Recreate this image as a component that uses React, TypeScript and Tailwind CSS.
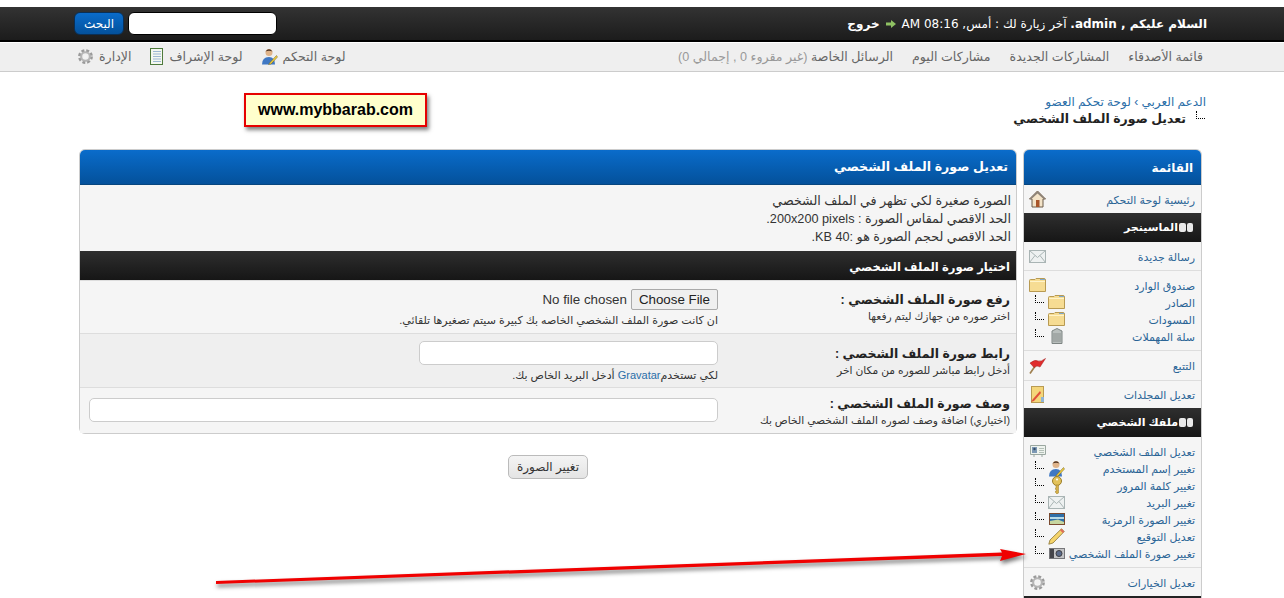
import { ReactNode } from "react";

const AR = "font-['Liberation_Sans','DejaVu_Sans',sans-serif]";

// small pictures used in the menus, drawn by hand
function Folder() {
  return (
    <svg width="17" height="14" viewBox="0 0 17 14">
      <path d="M.5 2.5 Q.5 1.5 1.5 1.5 H6 L7 .5 H15 Q16.5 .5 16.5 2 V13.5 H.5 Z" fill="#f6dc93" stroke="#b89a52" />
      <path d="M1 3.5 H16" stroke="#fff3c8" />
      <path d="M11 1.5 H16" stroke="#7fa7c9" />
    </svg>
  );
}

function House() {
  return (
    <svg width="17" height="18" viewBox="0 0 17 18">
      <path d="M8.5 1 L16.5 9 H14 V17 H3 V9 H.5 Z" fill="#f3e3c8" stroke="#6b5a48" />
      <path d="M8.5 1 L16.5 9 L14.5 9 L8.5 3.5 L2.5 9 L.5 9 Z" fill="#8d8276" />
      <rect x="7" y="10" width="3.5" height="7" fill="#a8552a" />
    </svg>
  );
}

function Mail() {
  return (
    <svg width="17" height="13" viewBox="0 0 17 13">
      <rect x=".5" y=".5" width="16" height="12" fill="#eef1f1" stroke="#a9b4b4" />
      <path d="M.5 .5 L8.5 7.5 L16.5 .5 M.5 12.5 L6 5.5 M16.5 12.5 L11 5.5" fill="none" stroke="#a9b4b4" />
    </svg>
  );
}

function Trash() {
  return (
    <svg width="12" height="16" viewBox="0 0 12 16">
      <path d="M1 3 L6 .5 L11 3 V15.5 H1 Z" fill="#b9bfbd" stroke="#7d8482" />
      <path d="M3 5 V14 M5 5 V14 M7 5 V14 M9 5 V14" stroke="#8b918f" />
    </svg>
  );
}

function Flag() {
  return (
    <svg width="17" height="16" viewBox="0 0 17 16">
      <path d="M1 15.5 L6.5 7.5" stroke="#a08050" strokeWidth="1.6" />
      <path d="M1 5 Q6 1 9 3 Q12 4 16.5 .5 L11 9 Q8 7 5 9.5 Z" fill="#e02c2c" stroke="#a01818" strokeWidth=".5" />
    </svg>
  );
}

function FolderPen() {
  return (
    <svg width="15" height="17" viewBox="0 0 15 17">
      <rect x="1.5" y=".5" width="12" height="16" fill="#f4d67a" stroke="#b89a52" />
      <path d="M10 5 L3 13 L1 16 L4 15 L11 7 Z" fill="#e0503a" />
      <rect x="11" y="11" width="3" height="5" fill="#8fb5d6" />
    </svg>
  );
}

function Card() {
  return (
    <svg width="16" height="13" viewBox="0 0 16 13">
      <path d="M.5 .5 H15.5 V9.5 H.5 Z" fill="#eef3ee" stroke="#9aa7a0" />
      <path d="M4 9.5 V12 M12 9.5 V12" stroke="#9aa7a0" />
      <rect x="2" y="2" width="5" height="6" fill="#7d98b4" />
      <circle cx="4.5" cy="4" r="1.2" fill="#2f4a66" />
      <path d="M9 3.5 H14 M9 5.5 H14 M9 7.5 H14" stroke="#b4c0b8" />
    </svg>
  );
}

function UserPen() {
  return (
    <svg width="16" height="17" viewBox="0 0 16 17">
      <circle cx="7" cy="4.5" r="3.5" fill="#e0b48a" />
      <path d="M3.5 3.5 Q7 -1 10.5 3.5 Q7 2 3.5 3.5Z" fill="#4a3020" />
      <path d="M0 16.5 Q0 9 7 9 Q13 9 13 16.5 Z" fill="#3f78c4" />
      <path d="M14.5 7.5 L8 14.5 L6.5 16.5 L9 16 L15.5 9 Z" fill="#f2cf3b" stroke="#6b5a20" strokeWidth=".5" />
    </svg>
  );
}

function Key() {
  return (
    <svg width="10" height="18" viewBox="0 0 10 18">
      <circle cx="5" cy="5" r="4.5" fill="#e3c25a" stroke="#9a7d28" />
      <circle cx="5" cy="3.5" r="1" fill="#fff" />
      <path d="M4 9 H6.5 V17 L5 18 L3.5 16.5 V15 H4.5 V13.5 H3.5 V12 H4 Z" fill="#d6b048" stroke="#9a7d28" strokeWidth=".5" />
    </svg>
  );
}

function Picture() {
  return (
    <svg width="16" height="12" viewBox="0 0 16 12">
      <rect x=".5" y=".5" width="15" height="11" fill="#2f6fa8" stroke="#7a4a30" />
      <path d="M1 4 H15 V6 H1 Z" fill="#b8dbe8" />
      <path d="M1 11 L1 8 L9 6.5 L15 9 V11 Z" fill="#c7d6a0" />
    </svg>
  );
}

function Pencil() {
  return (
    <svg width="17" height="17" viewBox="0 0 17 17">
      <path d="M13.5 .8 L16.2 3.5 L5 15 L.8 16.2 L2 12 Z" fill="#f5d46b" stroke="#8a7434" strokeWidth=".8" />
      <path d="M13.5 .8 L16.2 3.5 L14.8 5 L12 2.3 Z" fill="#e06c5a" />
    </svg>
  );
}

function Camera() {
  return (
    <svg width="16" height="11" viewBox="0 0 16 11">
      <rect x=".5" y=".5" width="15" height="10" fill="#c4c4c6" stroke="#77777a" />
      <rect x="1" y="1" width="4" height="9" fill="#45454a" />
      <circle cx="10" cy="5.5" r="3" fill="#5b6b8a" stroke="#3d3d42" />
    </svg>
  );
}

function Gear({ size = 15 }: { size?: number }) {
  return (
    <svg width={size} height={size} viewBox="0 0 16 16">
      <circle cx="8" cy="8" r="6.4" fill="none" stroke="#9a9a9a" strokeWidth="3" strokeDasharray="3 2.03" />
      <circle cx="8" cy="8" r="4.6" fill="none" stroke="#b5b5b5" strokeWidth="2.2" />
      <circle cx="8" cy="8" r="2.4" fill="#f2f2f2" />
    </svg>
  );
}

function Notebook() {
  return (
    <svg width="13" height="17" viewBox="0 0 13 17">
      <rect x=".5" y=".5" width="12" height="16" fill="#f4f8f0" stroke="#4e7a3c" />
      <path d="M3 3.5 H11 M3 6 H11 M3 8.5 H11 M3 11 H11 M3 13.5 H11" stroke="#9db8d4" />
    </svg>
  );
}

function GreenArrow() {
  return (
    <svg width="10" height="8" viewBox="0 0 10 8" className="mx-[6px] inline-block">
      <path d="M0 2.5 H5 V0 L10 4 L5 8 V5.5 H0 Z" fill="#8fc163" />
    </svg>
  );
}

// dotted tree connector in front of nested menu rows
function Tree() {
  return <span className="mb-[6px] block h-[8px] w-[9px] border-b border-l border-dotted border-black" />;
}

function MenuGroup({ children, last }: { children: ReactNode; last?: boolean }) {
  return <div className={`pr-[6px] pl-[5px] ${last ? "" : "border-b border-[#ddd]"}`}>{children}</div>;
}

function MenuRow({ icon, label, nested }: { icon: ReactNode; label: string; nested?: boolean }) {
  return (
    <div className="flex h-[17px] items-center justify-between">
      <a className="translate-y-px text-[11px] leading-[17px] whitespace-nowrap text-[#2a6496]">{label}</a>
      <span className="flex items-center">
        <span className="flex w-[17px] justify-center">{icon}</span>
        {nested && (
          <>
            <span className="w-[4px]" />
            <Tree />
            <span className="w-[6px]" />
          </>
        )}
      </span>
    </div>
  );
}

function MenuHead({ label }: { label: string }) {
  return (
    <div className="flex h-[29px] items-center gap-[1px] bg-gradient-to-b from-[#2f2f2f] to-[#161616] pr-[8px] text-[11px] font-bold text-white">
      <span className="flex h-[9px] w-[14px] gap-[1px]">
        <span className="flex-1 rounded-[2px] bg-[#e9e9e9]" />
        <span className="flex-1 rounded-[2px] bg-[#e9e9e9]" />
      </span>
      <span>{label}</span>
    </div>
  );
}

function BlueHead({ label, size }: { label: string; size: string }) {
  return (
    <div className={`flex h-[35px] items-center rounded-t-[5px] border-b border-[#07467f] bg-gradient-to-b from-[#0a6ccb] to-[#04519b] pr-[8px] font-bold text-white ${size}`}>
      {label}
    </div>
  );
}

function Sidebar() {
  return (
    <aside className="h-[470px] w-[179px] shrink-0 rounded-t-[6px] border border-b-0 border-[#ccc] bg-[#f5f5f5]">
      <BlueHead label="القائمة" size="text-[12px] pt-[2px]" />
      <MenuGroup last>
        <div className="flex h-[28px] items-center">
          <div className="w-full"><MenuRow icon={<House />} label="رئيسية لوحة التحكم" /></div>
        </div>
      </MenuGroup>
      <MenuHead label="الماسينجر" />
      <MenuGroup>
        <div className="flex h-[28px] items-center">
          <div className="w-full"><MenuRow icon={<Mail />} label="رسالة جديدة" /></div>
        </div>
      </MenuGroup>
      <MenuGroup>
        <div className="flex h-[79px] flex-col justify-center">
          <MenuRow icon={<Folder />} label="صندوق الوارد" />
          <MenuRow icon={<Folder />} label="الصادر" nested />
          <MenuRow icon={<Folder />} label="المسودات" nested />
          <MenuRow icon={<Trash />} label="سلة المهملات" nested />
        </div>
      </MenuGroup>
      <MenuGroup>
        <div className="flex h-[29px] items-center">
          <div className="w-full"><MenuRow icon={<Flag />} label="التتبع" /></div>
        </div>
      </MenuGroup>
      <MenuGroup last>
        <div className="flex h-[27px] items-center">
          <div className="w-full"><MenuRow icon={<FolderPen />} label="تعديل المجلدات" /></div>
        </div>
      </MenuGroup>
      <MenuHead label="ملفك الشخصي" />
      <MenuGroup>
        <div className="flex h-[130px] flex-col justify-center">
          <MenuRow icon={<Card />} label="تعديل الملف الشخصي" />
          <MenuRow icon={<UserPen />} label="تغيير إسم المستخدم" nested />
          <MenuRow icon={<Key />} label="تغيير كلمة المرور" nested />
          <MenuRow icon={<Mail />} label="تغيير البريد" nested />
          <MenuRow icon={<Picture />} label="تغيير الصورة الرمزية" nested />
          <MenuRow icon={<Pencil />} label="تعديل التوقيع" nested />
          <MenuRow icon={<Camera />} label="تغيير صورة الملف الشخصي" nested />
        </div>
      </MenuGroup>
      <MenuGroup last>
        <div className="flex h-[28px] items-center">
          <div className="w-full"><MenuRow icon={<Gear />} label="تعديل الخيارات" /></div>
        </div>
      </MenuGroup>
      <div className="h-[2px] bg-[#222]" />
    </aside>
  );
}

interface FormRowProps {
  title: string;
  hint: string;
  children: ReactNode;
  shade?: boolean;
  height: string;
  labelTop: string;
  fieldTop: string;
}

function FormRow({ title, hint, children, shade, height, labelTop, fieldTop }: FormRowProps) {
  return (
    <div className={`flex border-t border-[#ddd] ${height} ${shade ? "bg-[#efefef]" : "bg-[#f5f5f5]"}`}>
      <div className={`w-[298px] shrink-0 pr-[6px] ${labelTop}`}>
        <div className="text-[12.5px] leading-[17px] font-bold text-[#222]">{title}</div>
        <div className="mt-[1px] text-[10.7px] leading-[13px] text-[#333]">{hint}</div>
      </div>
      <div className={`flex-1 ${fieldTop}`}>{children}</div>
    </div>
  );
}

function TextInput({ className }: { className: string }) {
  return <input className={`block h-[24px] rounded-[5px] border border-[#ccc] bg-white ${className}`} />;
}

export default function App() {
  return (
    <div dir="rtl" className={`relative h-[598px] w-[1284px] overflow-hidden bg-white ${AR}`}>
      <div className="h-[7px] bg-white" />

      <header className="flex h-[35px] items-center justify-between border-b-2 border-black bg-gradient-to-b from-[#333] to-[#1c1c1c] pr-[77px] pl-[74px]">
        <div className="flex items-center font-['DejaVu_Sans',sans-serif] text-[12px] text-white">
          <span><b>السلام عليكم , admin.</b> آخر زيارة لك : أمس, 08:16 AM</span>
          <GreenArrow />
          <b>خروج</b>
        </div>
        <div className="flex items-center gap-[4px]">
          <input className="h-[23px] w-[149px] rounded-[6px] border border-black bg-white" />
          <button className="h-[23px] w-[50px] rounded-[6px] border border-[#0a2f55] bg-gradient-to-b from-[#0a6ccb] to-[#04519b] text-[12px] text-white">البحث</button>
        </div>
      </header>

      <nav className="mt-px flex h-[29px] items-center justify-between border-b border-[#ccc] bg-[#efefef] pr-[81px] pl-[78px] text-[12.6px] text-[#666]">
        <div className="flex gap-[19px]">
          <a>قائمة الأصدقاء</a>
          <a>المشاركات الجديدة</a>
          <a>مشاركات اليوم</a>
          <a>
            الرسائل الخاصة <span className="text-[#999]">(غير مقروء 0 , إجمالي 0)</span>
          </a>
        </div>
        <div className="flex items-center gap-[19px]">
          <a className="flex items-center gap-[5px]">لوحة التحكم <UserPen /></a>
          <a className="flex items-center gap-[6px]">لوحة الإشراف <Notebook /></a>
          <a className="flex items-center gap-[6px]">الإدارة <Gear /></a>
        </div>
      </nav>

      <main className="pr-[78px] pl-[79px]">
        <div className="pt-[22px]">
          <div className="text-[12px] leading-[16px] text-[#2a6ea8]">الدعم العربي › لوحة تحكم العضو</div>
          <div className="flex items-center pr-[1px]">
            <span className="mb-[8px] block h-[8px] w-[9px] border-b border-l border-dotted border-black" />
            <span className="mr-[10px] text-[12.5px] leading-[18px] font-bold text-[#222]">تعديل صورة الملف الشخصي</span>
          </div>
        </div>

        <div className="mt-[21px] flex gap-[6px] pr-[4px]">
          <Sidebar />

          <section className="w-[938px]">
            <div className="rounded-[6px] border border-[#ccc]">
              <BlueHead label="تعديل صورة الملف الشخصي" size="text-[12.6px]" />
              <div className="h-[66px] bg-[#f5f5f5] pt-[7px] pr-[5px] text-[12.7px] leading-[18px] text-[#333]">
                <div>الصورة صغيرة لكي تظهر في الملف الشخصي</div>
                <div>الحد الاقصي لمقاس الصورة : 200x200 pixels.</div>
                <div>الحد الاقصي لحجم الصورة هو :40 KB.</div>
              </div>
              <div className="flex h-[29px] items-center bg-gradient-to-b from-[#2f2f2f] to-[#161616] pt-[2px] pr-[6px] text-[11.6px] font-bold text-white">
                اختيار صورة الملف الشخصي
              </div>
              <FormRow title="رفع صورة الملف الشخصي :" hint="اختر صوره من جهازك ليتم رفعها" height="h-[53px]" labelTop="pt-[11px]" fieldTop="pt-[8px]">
                <input
                  type="file"
                  className="block h-[22px] w-[240px] text-[13.33px] text-[#333] file:ml-[4px] file:h-[21px] file:rounded-[2px] file:border file:border-[#aaa] file:bg-[#efefef] file:px-[7px] file:text-[13.33px] file:text-[#222]"
                />
                <div className="mt-[3px] text-[11px] leading-[13px] text-[#333]">ان كانت صورة الملف الشخصي الخاصه بك كبيرة سيتم تصغيرها تلقائي.</div>
              </FormRow>
              <FormRow title="رابط صورة الملف الشخصي :" hint="أدخل رابط مباشر للصوره من مكان اخر" shade height="h-[54px]" labelTop="pt-[12px]" fieldTop="pt-[7px]">
                <TextInput className="w-[299px]" />
                <div className="mt-[4px] text-[11px] leading-[13px] text-[#333]">
                  لكي تستخدم<a className="text-[#2a6ea8]">Gravatar</a> أدخل البريد الخاص بك.
                </div>
              </FormRow>
              <FormRow title="وصف صورة الملف الشخصي :" hint="(اختياري) اضافة وصف لصوره الملف الشخصي الخاص بك" height="h-[46px]" labelTop="pt-[8px]" fieldTop="pt-[10px]">
                <TextInput className="w-[629px]" />
              </FormRow>
            </div>

            <div className="mt-[21px] flex justify-center">
              <button className="h-[24px] w-[80px] rounded-[5px] border border-[#bbb] bg-gradient-to-b from-[#f4f4f4] to-[#e4e4e4] text-[12px] text-[#333]">
                تغيير الصورة
              </button>
            </div>
          </section>
        </div>
      </main>

      {/* notes pasted over the screenshot */}
      <div
        dir="ltr"
        className="absolute top-[93px] left-[244px] flex h-[34px] w-[183px] items-center justify-center border-2 border-[#e60000] bg-[#ffffcc] text-[16px] font-bold text-black shadow-[2px_3px_4px_rgba(0,0,0,0.5)]"
      >
        www.mybbarab.com
      </div>

      <svg className="pointer-events-none absolute top-0 left-0 drop-shadow-[1px_3px_2px_rgba(0,0,0,0.55)]" width="1284" height="598">
        <path d="M216 581 L1002 552.5 L1000 549 L1026 554 L1000 561 L1002 556 L216 584 Z" fill="#f00000" />
      </svg>
    </div>
  );
}
